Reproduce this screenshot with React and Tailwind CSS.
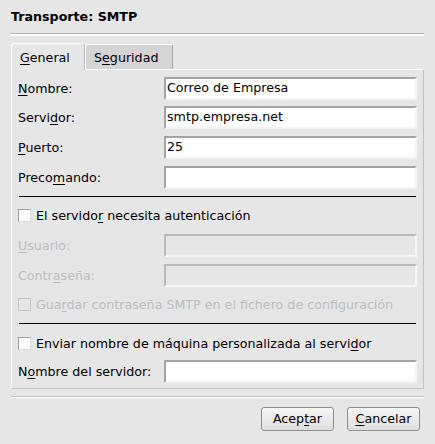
import React from "react";

const U = ({ children }) => (
  <span className="underline underline-offset-2 decoration-1">{children}</span>
);

const Field = ({ value = "", disabled = false }) => (
  <div
    className={`w-[253px] h-[23px] shrink-0 border-2 pl-[1px] flex items-center leading-none ${
      disabled
        ? "bg-[#e6e6e6] border-t-[#b9b9b9] border-l-[#b9b9b9] border-b-[#f7f7f7] border-r-[#f7f7f7]"
        : "bg-white border-t-[#a3a3a3] border-l-[#a3a3a3] border-b-[#f4f4f4] border-r-[#f4f4f4]"
    }`}
  >
    {value}
  </div>
);

const Row = ({ label, value, disabled, className = "" }) => (
  <div className={`flex items-center justify-between h-[23px] ${className}`}>
    <span className={disabled ? "text-[#bcbcbc]" : ""}>{label}</span>
    <Field value={value} disabled={disabled} />
  </div>
);

const Check = ({ label, disabled, className = "" }) => (
  <div className={`flex items-center gap-[5px] h-[13px] ${className}`}>
    <div
      className={`w-[13px] h-[13px] shrink-0 border ${
        disabled
          ? "bg-[#e6e6e6] border-[#c4c4c4]"
          : "bg-white border-t-[#9d9d9d] border-l-[#9d9d9d] border-b-[#dcdcdc] border-r-[#dcdcdc]"
      }`}
    />
    <span className={`whitespace-nowrap ${disabled ? "text-[#bcbcbc]" : ""}`}>{label}</span>
  </div>
);

const Button = ({ children }) => (
  <button className="w-[73px] h-[24px] rounded-[3px] border border-[#8e8e8e] bg-gradient-to-b from-[#f6f6f6] to-[#dedede] leading-none">
    {children}
  </button>
);

export default function App() {
  return (
    <div
      className="w-[435px] h-[444px] bg-[#e6e6e6] text-[12.67px] text-black px-[11px] pt-[9px] flex flex-col"
      style={{ fontFamily: '"DejaVu Sans", "Noto Sans", sans-serif' }}
    >
      <div className="h-[16px] leading-[16px] font-bold">Transporte: SMTP</div>
      <div className="mt-[8px] border-t border-[#b5b5b5] border-b-2 border-b-white w-[413px]" />

      <div className="mt-[7px] flex items-end h-[26px]">
        <div className="w-[74px] bg-[#e6e6e6] border-t border-l border-white border-r border-r-[#b8b8b8] rounded-tl-[3px] rounded-tr-[3px] pl-[8px] pt-[4px] relative z-10 -mb-[1px] h-[27px]">
          <U>G</U>eneral
        </div>
        <div className="w-[88px] h-[25px] bg-[#d5d5d5] border-t border-l border-white border-r border-r-[#a8a8a8] rounded-tr-[3px] pl-[8px] pt-[3px]">
          S<U>e</U>guridad
        </div>
      </div>

      <div className="w-[413px] h-[320px] border border-white border-r-[#c2c2c2] border-b-[#c8c8c8] px-[6px] pt-[7px] flex flex-col">
        <Row label={<><U>N</U>ombre:</>} value="Correo de Empresa" />
        <Row className="mt-[6px]" label={<>Servi<U>d</U>or:</>} value="smtp.empresa.net" />
        <Row className="mt-[7px]" label={<><U>P</U>uerto:</>} value="25" />
        <Row className="mt-[7px]" label={<>Preco<U>m</U>ando:</>} value="" />
        <div className="mt-[7px] h-[1px] bg-black mx-[1px]" />
        <Check className="mt-[12px]" label={<>El servido<U>r</U> necesita autenticación</>} />
        <Row className="mt-[12px]" disabled label={<><U>U</U>suario:</>} />
        <Row className="mt-[7px]" disabled label={<>Contr<U>a</U>seña:</>} />
        <Check className="mt-[11px]" disabled label={<>Gua<U>r</U>dar contraseña SMTP en el fichero de configuración</>} />
        <div className="mt-[12px] h-[1px] bg-black mx-[1px]" />
        <Check className="mt-[13px]" label={<>Enviar nombre de máquina personalizada al servi<U>d</U>or</>} />
        <Row className="mt-[10px]" label={<>N<U>o</U>mbre del servidor:</>} />
      </div>

      <div className="mt-[7px] w-[413px] border-t border-[#c2c2c2] border-b border-b-white" />

      <div className="mt-[9px] flex justify-end gap-[13px] pr-[4px]">
        <Button>
          Acep<U>t</U>ar
        </Button>
        <Button>
          <U>C</U>ancelar
        </Button>
      </div>
    </div>
  );
}
